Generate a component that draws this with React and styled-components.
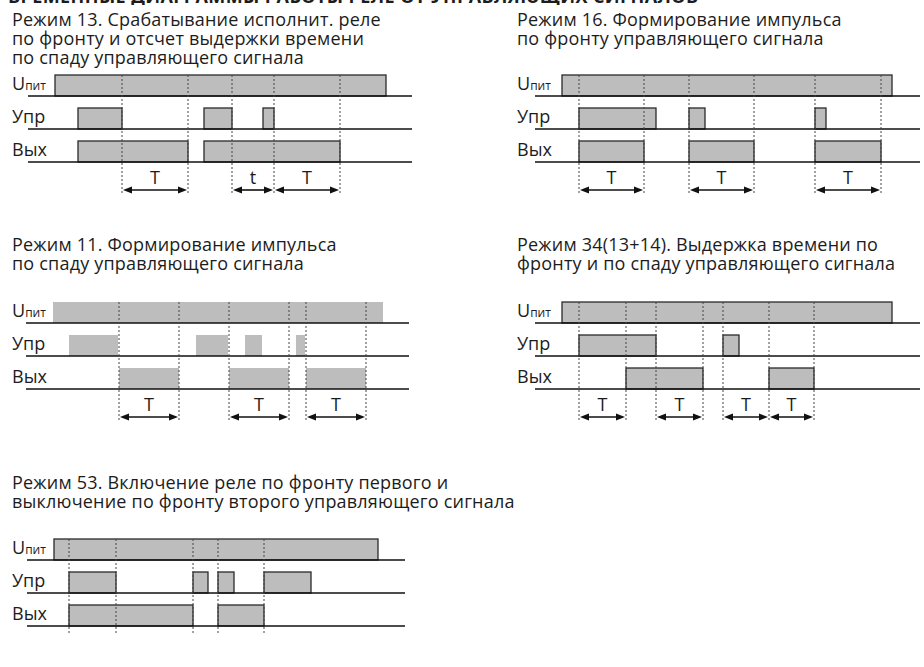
import React from 'react'
import styled, { createGlobalStyle } from 'styled-components'

const GlobalStyle = createGlobalStyle`
  body {
    margin: 0;
    background: #fff;
    color: #1c1c1c;
    font-family: "Open Sans", "Noto Sans", sans-serif;
  }
`

// x coords are local to each chart (chart origin = panel padding edge)
const modes = [
  {
    id: 13,
    title: ['Режим 13. Срабатывание исполнит. реле', 'по фронту и отсчет выдержки времени', 'по спаду управляющего сигнала'],
    line: [18, 402],
    rows: [
      [[45, 376]],
      [[68, 112], [194, 222], [253, 264]],
      [[68, 178], [194, 330]],
    ],
    dashes: [112, 178, 222, 264, 330],
    arrows: [[112, 178, 'T'], [222, 264, 't'], [264, 330, 'T']],
    outline: true,
  },
  {
    id: 16,
    title: ['Режим 16. Формирование импульса', 'по фронту управляющего сигнала'],
    line: [20, 405],
    rows: [
      [[47, 377]],
      [[64, 141], [174, 190], [300, 311]],
      [[64, 129], [174, 239], [300, 366]],
    ],
    dashes: [64, 129, 174, 239, 300, 366],
    arrows: [[64, 129, 'T'], [174, 239, 'T'], [300, 366, 'T']],
    outline: true,
  },
  {
    id: 11,
    title: ['Режим 11. Формирование импульса', 'по спаду управляющего сигнала'],
    line: [16, 399],
    rows: [
      [[43, 373]],
      [[59, 108], [186, 218], [235, 252], [286, 295]],
      [[109, 169], [219, 279], [296, 356]],
    ],
    dashes: [109, 169, 219, 279, 296, 356],
    arrows: [[109, 169, 'T'], [219, 279, 'T'], [296, 356, 'T']],
    outline: false,
  },
  {
    id: 34,
    title: ['Режим 34(13+14). Выдержка времени по', 'фронту и по спаду управляющего сигнала'],
    line: [20, 405],
    rows: [
      [[47, 377]],
      [[64, 141], [208, 224]],
      [[111, 188], [254, 299]],
    ],
    dashes: [64, 111, 141, 188, 208, 254, 299],
    arrows: [[64, 111, 'T'], [141, 188, 'T'], [208, 254, 'T'], [254, 299, 'T']],
    outline: true,
  },
  {
    id: 53,
    title: ['Режим 53. Включение реле по фронту первого и', 'выключение по фронту второго управляющего сигнала'],
    line: [17, 395],
    rows: [
      [[44, 368]],
      [[59, 106], [183, 198], [208, 224], [254, 301]],
      [[59, 183], [208, 254]],
    ],
    dashes: [59, 106, 183, 208, 254],
    arrows: [],
    outline: true,
  },
]

const ROW_STEP = 33
const BOX_TOP = 4
const BOX_H = 21

const Page = styled.div`
  width: 924px;
  height: 667px;
  overflow: hidden;
`

// only the bottom edge of the page heading is visible in the crop
const Heading = styled.div`
  height: 5px;
  overflow: hidden;
  display: flex;
  align-items: flex-end;
  padding-left: 8px;

  span {
    font-weight: 700;
    font-size: 18px;
    line-height: 18px;
    white-space: nowrap;
    letter-spacing: 0.4px;
  }
`

const Row = styled.div`
  display: grid;
  grid-template-columns: 460px 1fr;
  margin-top: ${p => p.$top}px;
`

const Panel = styled.section`
  display: flex;
  flex-direction: column;
  gap: ${p => p.$gap}px;
  padding-left: ${p => p.$pad}px;
`

const Title = styled.h3`
  margin: 0;
  padding-left: 2px;
  font-weight: 400;
  font-size: 18px;
  line-height: 19px;
  letter-spacing: 0.2px;
  white-space: nowrap;

  span {
    display: block;
  }
`

const ChartSvg = styled.svg`
  display: block;
  margin-top: auto;
  overflow: visible;
  font-family: "Open Sans", "Noto Sans", sans-serif;
`

const Arrow = ({ x1, x2, y, label }) => (
  <g>
    <line x1={x1 + 6} x2={x2 - 6} y1={y} y2={y} stroke="#111" strokeWidth="1.6" />
    <polygon points={`${x1 + 1},${y} ${x1 + 10},${y - 3.5} ${x1 + 10},${y + 3.5}`} fill="#111" />
    <polygon points={`${x2 - 1},${y} ${x2 - 10},${y - 3.5} ${x2 - 10},${y + 3.5}`} fill="#111" />
    <text x={(x1 + x2) / 2} y={y - 6} textAnchor="middle" fontSize="18" fill="#1c1c1c">{label}</text>
  </g>
)

const TimingChart = ({ mode, width }) => {
  const hasArrows = mode.arrows.length > 0
  const height = hasArrows ? 128 : 104
  const dashEnd = hasArrows ? 124 : 100
  const labels = ['U', 'Упр', 'Вых']

  return (
    <ChartSvg width={width} height={height} viewBox={`0 0 ${width} ${height}`}>
      {mode.rows.map((boxes, r) => {
        const base = BOX_TOP + BOX_H + r * ROW_STEP
        return (
          <g key={r}>
            {boxes.map(([a, b], i) => (
              <rect
                key={i}
                x={a}
                y={base - BOX_H}
                width={b - a}
                height={BOX_H}
                fill="#bdbdbd"
                stroke={mode.outline ? '#2a2a2a' : 'none'}
                strokeWidth="1.3"
              />
            ))}
            <line x1={mode.line[0]} x2={mode.line[1]} y1={base} y2={base} stroke="#111" strokeWidth="1.6" />
            <text x="2" y={base - 6} fontSize="18" fill="#1c1c1c">
              {labels[r]}
              {r === 0 && <tspan fontSize="12">пит</tspan>}
            </text>
          </g>
        )
      })}
      {mode.dashes.map(x => (
        <line key={x} x1={x} x2={x} y1={BOX_TOP} y2={dashEnd} stroke="#444" strokeWidth="1" strokeDasharray="2 2" />
      ))}
      {mode.arrows.map(([a, b, label], i) => (
        <Arrow key={i} x1={a} x2={b} y={119} label={label} />
      ))}
    </ChartSvg>
  )
}

const ModePanel = ({ mode, pad, gap, width }) => (
  <Panel $pad={pad} $gap={gap}>
    <Title>
      {mode.title.map(line => <span key={line}>{line}</span>)}
    </Title>
    <TimingChart mode={mode} width={width} />
  </Panel>
)

export default function App() {
  const [m13, m16, m11, m34, m53] = modes
  return (
    <Page>
      <GlobalStyle />
      <Heading>
        <span>ВРЕМЕННЫЕ ДИАГРАММЫ РАБОТЫ РЕЛЕ ОТ УПРАВЛЯЮЩИХ СИГНАЛОВ</span>
      </Heading>
      <Row $top={5}>
        <ModePanel mode={m13} pad={10} gap={4} width={410} />
        <ModePanel mode={m16} pad={55} gap={4} width={409} />
      </Row>
      <Row $top={36}>
        <ModePanel mode={m11} pad={10} gap={25} width={410} />
        <ModePanel mode={m34} pad={55} gap={25} width={409} />
      </Row>
      <Row $top={47}>
        <ModePanel mode={m53} pad={10} gap={24} width={520} />
        <div />
      </Row>
    </Page>
  )
}
